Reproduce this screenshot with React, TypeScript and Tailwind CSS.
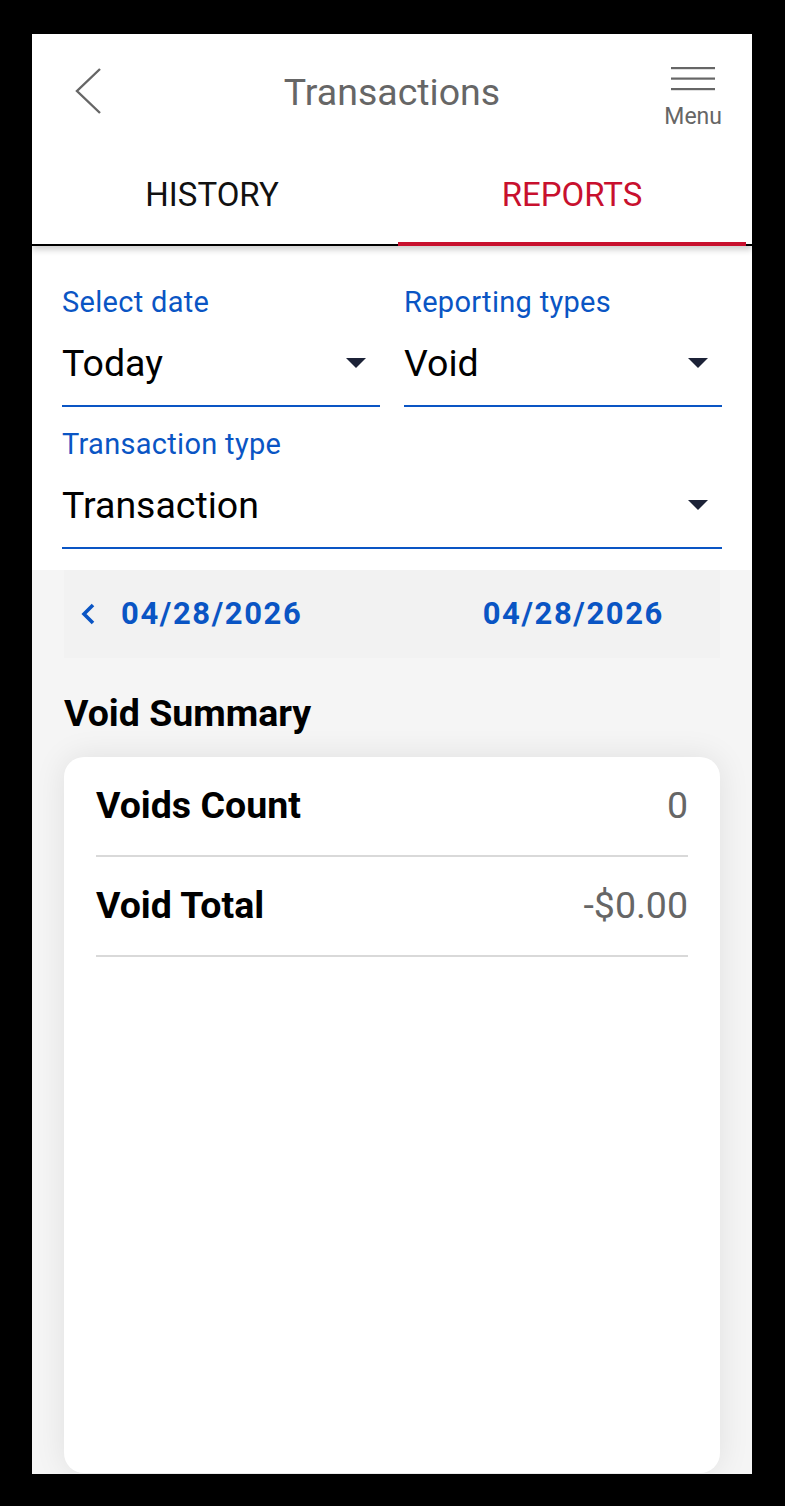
import React from "react";

const BLUE = "#0a55c4";

function Caret() {
  return (
    <svg width="20" height="10" viewBox="0 0 20 10" className="shrink-0">
      <polygon points="0,0 20,0 10,10" fill="#1c2237" />
    </svg>
  );
}

function SelectField({ label, value, className = "" }: { label: string; value: string; className?: string }) {
  return (
    <div className={`flex flex-col ${className}`}>
      <span className="text-[29px] leading-[32px] tracking-[0.3px] text-[#0a55c4]">{label}</span>
      <div className="mt-[25px] flex items-center justify-between border-b-2 border-[#0a55c4] pb-[22px] pr-[14px]">
        <span className="text-[37.5px] leading-[40px] text-black">{value}</span>
        <Caret />
      </div>
    </div>
  );
}

function SummaryRow({ label, value }: { label: string; value: string }) {
  return (
    <div className="flex items-center justify-between border-b-2 border-[#d9d9d9] pt-[28px] pb-[30px]">
      <span className="text-[37.5px] leading-[40px] font-bold text-black">{label}</span>
      <span className="text-[37.5px] leading-[40px] text-[#666]">{value}</span>
    </div>
  );
}

export default function App() {
  return (
    <div className="w-[785px] h-[1506px] bg-black pt-[34px] pl-[32px] font-['Roboto',sans-serif]">
      <div className="w-[720px] h-[1440px] bg-white overflow-hidden flex flex-col">
        {/* Header + tabs */}
        <div className="relative z-10 bg-white shadow-[0_4px_6px_rgba(0,0,0,0.18)]">
          <div className="grid grid-cols-[1fr_auto_1fr] items-start h-[116px]">
            <div className="pl-[43px] pt-[33px]">
              <svg width="28" height="48" viewBox="0 0 28 48">
                <polyline points="25,2 2,24 25,46" fill="none" stroke="#666" strokeWidth="2.4" />
              </svg>
            </div>
            <div className="pt-[36px] text-[37.5px] leading-[44px] text-[#666]">Transactions</div>
            <div className="flex justify-end pr-[30px]">
              <div className="flex flex-col items-center pt-[33px]">
                <svg width="44" height="24" viewBox="0 0 44 24">
                  <rect x="0" y="0" width="44" height="2.2" fill="#666" />
                  <rect x="0" y="10.5" width="44" height="2.2" fill="#666" />
                  <rect x="0" y="21" width="44" height="2.2" fill="#666" />
                </svg>
                <span className="mt-[13px] text-[23px] leading-[26px] text-[#666]">Menu</span>
              </div>
            </div>
          </div>
          <div className="flex border-b-2 border-black">
            <div className="flex-1 h-[94px] flex items-center justify-center pb-[4px] text-[33px] text-[#111]">HISTORY</div>
            <div className="relative flex-1 h-[94px] flex items-center justify-center pb-[4px] text-[33px] text-[#c8102e]">
              REPORTS
              <div className="absolute left-[6px] right-[6px] bottom-[-2px] h-[4px] bg-[#c8102e]" />
            </div>
          </div>
        </div>

        {/* Filters */}
        <div className="px-[30px] pt-[40px] pb-[21px] bg-white">
          <div className="grid grid-cols-2 gap-x-[24px]">
            <SelectField label="Select date" value="Today" />
            <SelectField label="Reporting types" value="Void" />
          </div>
          <SelectField className="mt-[21px]" label="Transaction type" value="Transaction" />
        </div>

        {/* Report area */}
        <div className="flex-1 flex flex-col bg-[#f5f5f5] px-[32px]">
          <div className="h-[88px] flex items-center justify-between bg-[#f2f2f2] pl-[17px] pr-[16px]">
            <div className="flex items-center gap-[26px]">
              <svg width="14" height="22" viewBox="0 0 14 22">
                <polyline points="12,2 3,11 12,20" fill="none" stroke={BLUE} strokeWidth="3.6" />
              </svg>
              <span className="text-[31px] font-bold tracking-[1.6px] text-[#0a55c4]">04/28/2026</span>
            </div>
            <div className="flex items-center gap-[26px]">
              <span className="text-[31px] font-bold tracking-[1.6px] text-[#0a55c4]">04/28/2026</span>
              <svg width="14" height="22" viewBox="0 0 14 22" className="invisible">
                <polyline points="2,2 11,11 2,20" fill="none" stroke={BLUE} strokeWidth="3.6" />
              </svg>
            </div>
          </div>
          <div className="pt-[33px] pb-[22px] text-[37.5px] leading-[44px] font-bold text-black">Void Summary</div>
          <div className="flex-1 bg-white rounded-[20px] px-[32px] shadow-[0_0_32px_rgba(0,0,0,0.09)] mb-[1px]">
            <SummaryRow label="Voids Count" value="0" />
            <SummaryRow label="Void Total" value="-$0.00" />
          </div>
        </div>
      </div>
    </div>
  );
}
